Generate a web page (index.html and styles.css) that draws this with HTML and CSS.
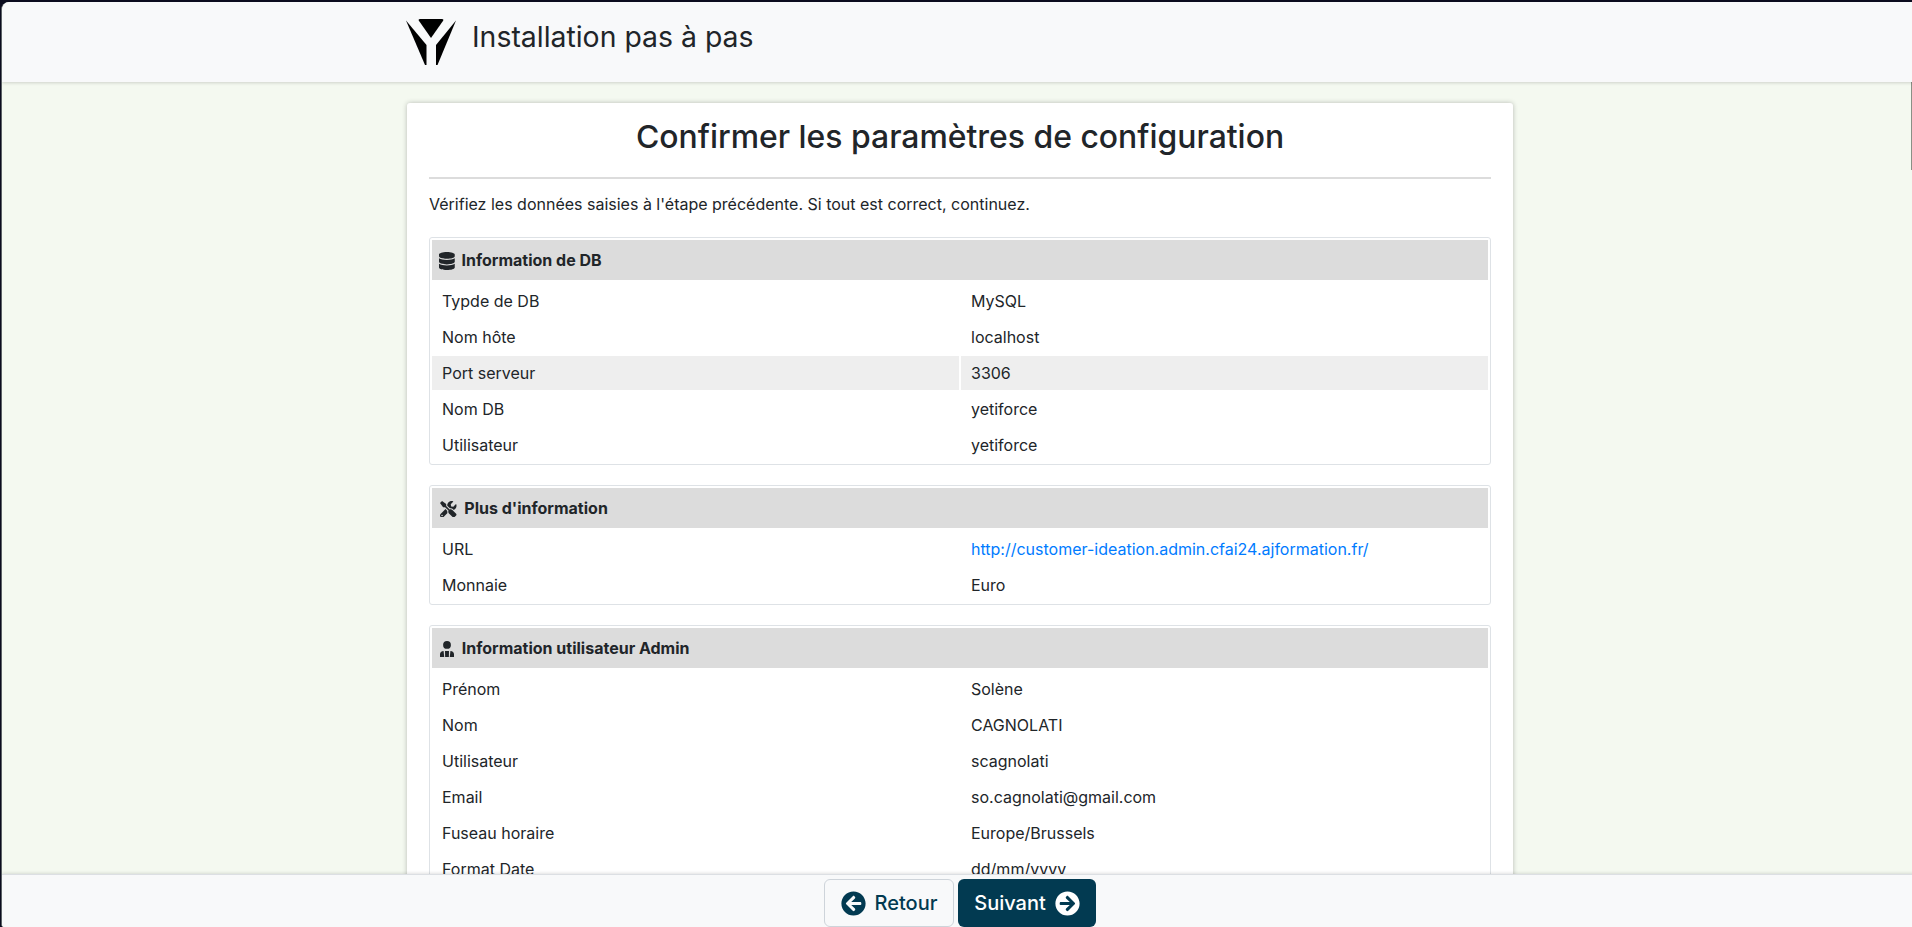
FILE: index.html
```html
<!DOCTYPE html>
<html lang="fr">
<head>
<meta charset="utf-8">
<title>Installation pas à pas</title>
<link rel="stylesheet" href="styles.css">
</head>
<body>
<div class="window">
  <header class="topbar">
    <div class="container topbar-inner">
      <svg class="logo" viewBox="0 0 50 46" aria-hidden="true">
        <path d="M14 0H36C37.300 0 37.700 .8 37.100 1.800L25 19 12.900 1.800C12.300 .8 12.700 0 14 0Z" fill="#000"/>
        <path d="M0 1.500L20.500 26V46H19Z" fill="#000"/>
        <path d="M50 1.500L30 26V46H31.500Z" fill="#000"/>
      </svg>
      <h1 class="brand">Installation pas à pas</h1>
    </div>
  </header>
  <main class="main">
    <div class="container">
      <section class="card">
        <h2 class="title">Confirmer les paramètres de configuration</h2>
        <hr class="rule">
        <p class="lead">Vérifiez les données saisies à l'étape précédente. Si tout est correct, continuez.</p>

        <table class="info">
          <thead><tr><th colspan="2">
            <svg class="ico ico-db" viewBox="0 0 448 512"><path d="M448 73.100v45.700C448 159 347.700 192 224 192S0 159 0 118.900V73.100C0 33 100.300 0 224 0s224 33 224 73.100zM448 176v102.900C448 319 347.700 352 224 352S0 319 0 278.900V176c48.100 33.100 136.200 48.600 224 48.600S399.900 209.100 448 176zm0 160v102.900C448 479 347.700 512 224 512S0 479 0 438.900V336c48.100 33.100 136.200 48.600 224 48.600S399.900 369.100 448 336z"/></svg>
            Information de DB</th></tr></thead>
          <tbody>
            <tr><td>Typde de DB</td><td>MySQL</td></tr>
            <tr><td>Nom hôte</td><td>localhost</td></tr>
            <tr class="hl"><td>Port serveur</td><td>3306</td></tr>
            <tr><td>Nom DB</td><td>yetiforce</td></tr>
            <tr><td>Utilisateur</td><td>yetiforce</td></tr>
          </tbody>
        </table>

        <table class="info">
          <thead><tr><th colspan="2">
            <svg class="ico ico-tools" viewBox="0 0 512 512"><path d="M501.100 395.700 384 278.600c-23.100-23.100-57.600-27.600-85.400-13.900L192 158.100V96L64 0 0 64l96 128h62.100l106.600 106.600c-13.600 27.800-9.200 62.300 13.900 85.400l117.100 117.100c14.600 14.600 38.200 14.600 52.700 0l52.700-52.700c14.500-14.600 14.500-38.200 0-52.700zM331.700 225c28.300 0 54.900 11 74.900 31l19.400 19.400c15.800-6.900 30.800-16.500 43.800-29.500 37.100-37.100 49.700-89.300 37.900-136.700-2.200-9-13.500-12.100-20.100-5.500l-74.400 74.400-67.900-11.300L334 98.900l74.400-74.400c6.600-6.600 3.400-17.900-5.700-20.200-47.400-11.700-99.600.9-136.600 37.900-28.500 28.500-41.900 66.100-41.200 103.600l82.100 82.100c8.100-1.900 16.500-2.900 24.700-2.900zm-103.900 82-56.700-56.700L18.700 402.800c-25 25-25 65.500 0 90.500s65.500 25 90.500 0l123.600-123.600c-7.600-19.900-9.900-41.600-5-62.700zM64 472c-13.200 0-24-10.800-24-24 0-13.300 10.700-24 24-24s24 10.700 24 24c0 13.200-10.700 24-24 24z"/></svg>
            Plus d'information</th></tr></thead>
          <tbody>
            <tr><td>URL</td><td><a class="link" href="#">http://customer-ideation.admin.cfai24.ajformation.fr/</a></td></tr>
            <tr><td>Monnaie</td><td>Euro</td></tr>
          </tbody>
        </table>

        <table class="info">
          <thead><tr><th colspan="2">
            <svg class="ico ico-user" viewBox="0 0 448 512"><circle cx="224" cy="125" r="125"/><path d="M0 512V425c0-55 45-100 115-105l20 192zM448 512V425c0-55-45-100-115-105l-20 192zM164 512l-4-192h128l-4 192z"/></svg>
            Information utilisateur Admin</th></tr></thead>
          <tbody>
            <tr><td>Prénom</td><td>Solène</td></tr>
            <tr><td>Nom</td><td>CAGNOLATI</td></tr>
            <tr><td>Utilisateur</td><td>scagnolati</td></tr>
            <tr><td>Email</td><td>so.cagnolati@gmail.com</td></tr>
            <tr><td>Fuseau horaire</td><td>Europe/Brussels</td></tr>
            <tr><td>Format Date</td><td>dd/mm/yyyy</td></tr>
          </tbody>
        </table>
      </section>
    </div>
  </main>
  <footer class="footer">
    <a class="btn btn-back" href="#">
      <svg class="btn-ico" viewBox="0 0 512 512"><path fill="currentColor" d="M256 504C119 504 8 393 8 256S119 8 256 8s248 111 248 248-111 248-248 248zm28.900-143.600L209.400 288H392c13.300 0 24-10.700 24-24v-16c0-13.300-10.700-24-24-24H209.400l75.500-72.400c9.700-9.300 9.900-24.800.4-34.300l-11-10.900c-9.400-9.400-24.600-9.400-33.900 0L107.700 239c-9.400 9.400-9.400 24.600 0 33.900l132.700 132.700c9.400 9.400 24.600 9.400 33.900 0l11-10.900c9.500-9.500 9.300-25-.4-34.300z"/></svg>
      Retour</a>
    <a class="btn btn-next" href="#">Suivant
      <svg class="btn-ico" viewBox="0 0 512 512"><path fill="currentColor" d="M256 8c137 0 248 111 248 248S393 504 256 504 8 393 8 256 119 8 256 8zm-28.900 143.600l75.500 72.400H120c-13.300 0-24 10.700-24 24v16c0 13.300 10.700 24 24 24h182.600l-75.500 72.400c-9.700 9.300-9.900 24.800-.4 34.300l11 10.900c9.400 9.400 24.600 9.400 33.900 0L404.300 273c9.400-9.400 9.400-24.600 0-33.900L271.600 106.300c-9.400-9.400-24.600-9.400-33.900 0l-11 10.900c-9.500 9.500-9.300 25 .4 34.400z"/></svg>
    </a>
  </footer>
</div>
<div class="scroll-thumb"></div>
</body>
</html>
```
FILE: styles.css
```css
* { box-sizing: border-box; }
html, body { margin: 0; height: 100%; overflow: hidden; }
body {
  background: #0b0c1e;
  padding: 2px 0 0 1px;
  font-family: Inter, "Liberation Sans", sans-serif;
  font-size: 16px;
  line-height: 24px;
  color: #212529;
}
.window {
  width: 1917px;
  height: 100%;
  display: flex;
  flex-direction: column;
  background: #f4f9f0;
  border-left: 1px solid #5c6266;
  border-radius: 8px 0 0 3px;
  overflow: hidden;
}
.scroll-thumb {
  position: absolute;
  top: 5px;
  right: 0;
  width: 1px;
  height: 165px;
  background: #8a9086;
}
.container { width: 1106px; margin: 0 auto; }
.topbar {
  height: 80px;
  flex: none;
  background: #f8f9fa;
  box-shadow: 0 1px 3px rgba(0,0,0,.16);
  position: relative;
  z-index: 1;
}
.topbar-inner { display: flex; align-items: flex-start; height: 100%; gap: 16px; }
.logo { width: 50px; height: 46px; flex: none; margin: 17px 0 0 -1px; }
.brand { margin: 18px 0 0; font-size: 28.400px; font-weight: 400; line-height: 34px; }
.main { flex: 1; min-height: 0; overflow: hidden; padding-top: 21px; }
.card {
  width: 1106px;
  background: #fff;
  border-radius: 3px;
  box-shadow: 0 0 5px rgba(0,0,0,.25);
  padding: 0 22px 22px;
}
.title { margin: 0; padding-top: 14px; text-align: center; font-size: 31.900px; font-weight: 500; line-height: 40px; height: 74px; }
.rule { margin: 0; border: 0; height: 2px; background: #dcdcdc; }
.lead { margin: 13px 0 21px; font-size: 16px; line-height: 24px; }
.info {
  width: 100%;
  table-layout: fixed;
  border: 1px solid #dee2e6;
  border-radius: 3px;
  border-collapse: separate;
  border-spacing: 2px;
  margin-bottom: 20px;
}
.info th {
  height: 42px;
  padding: 0 8px;
  background: #dcdcdc;
  background-clip: padding-box;
  border-bottom: 2px solid #fff;
  text-align: left;
  font-weight: 700;
  font-size: 16px;
}
.info td { height: 34px; padding: 5px 10px; font-size: 16px; }
.hl td { background: #eee; }
.ico { width: auto; fill: #212529; }
.ico-db { height: 18px; vertical-align: -4px; margin: 0 3px 0 -1px; }
.ico-tools { height: 16.500px; vertical-align: -3px; margin-right: 4px; }
.ico-user { height: 16px; vertical-align: -3px; margin-right: 4px; }
.link { color: #007bff; text-decoration: none; }
.footer {
  flex: none;
  height: 53px;
  display: flex;
  justify-content: center;
  gap: 4px;
  padding-top: 4px;
  background: #f8f9fa;
  border-top: 1px solid #dcdfe3;
  box-shadow: 0 -1px 3px rgba(0,0,0,.12);
  position: relative;
  z-index: 1;
}
.btn {
  display: flex;
  align-items: center;
  justify-content: center;
  height: 48px;
  gap: 9px;
  border-radius: 6px;
  font-size: 20px;
  font-weight: 500;
  text-decoration: none;
}
.btn-back { width: 130px; color: #023a51; border: 1px solid #ced4da; background: #f8f9fa; }
.btn-next { width: 138px; color: #fff; background: #023a51; }
.btn-ico { width: 25px; height: 25px; }
```
